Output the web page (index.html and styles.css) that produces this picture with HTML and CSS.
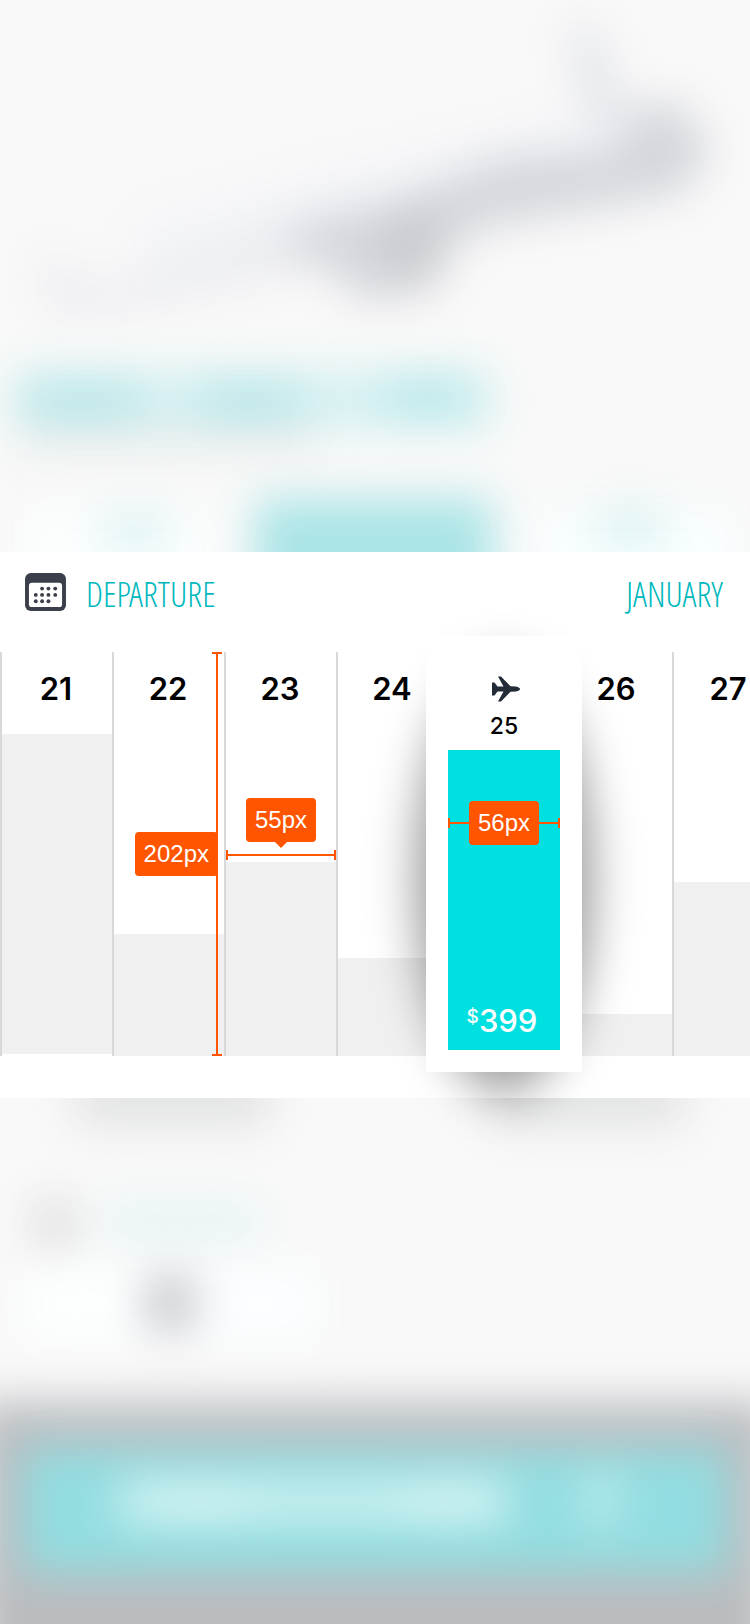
FILE: index.html
```html
<!DOCTYPE html>
<html lang="en">
<head>
<meta charset="utf-8">
<meta name="viewport" content="width=device-width, initial-scale=1">
<title>Departure</title>
<link rel="stylesheet" href="styles.css">
</head>
<body>
<main class="screen">
  <svg class="scene scene-top" viewBox="0 0 750 552" preserveAspectRatio="none" aria-hidden="true">
    <defs>
      <filter id="soft" filterUnits="userSpaceOnUse" x="-100" y="-100" width="950" height="850" color-interpolation-filters="sRGB"><feGaussianBlur stdDeviation="22"/></filter>
    </defs>
    <g filter="url(#soft)">
      <path d="M130 225 L300 180 L560 120 L640 120 L640 180 L420 220 L150 275z" fill="#f3f4f8"/>
      <path d="M35 255 L65 262 L95 290 L300 220 L340 262 L120 310 L60 318z" fill="#ebecf0"/>
      <path d="M566 25 L596 28 L632 125 L590 125z" fill="#e2e4ea"/>
      <path d="M625 118 L672 98 L712 150 L680 192 L480 226 L446 254 L434 290 L360 300 L325 262 L290 256 L290 226 L400 200 L500 160 L625 150z" fill="#d3d5db"/>
      <path d="M390 210 L440 206 L434 282 L390 282z" fill="#c9cace"/>
      <rect x="18" y="425" width="300" height="32" fill="#ededed"/>
      <rect x="12" y="372" width="480" height="56" fill="#d4f0f1"/>
      <rect x="25" y="380" width="115" height="40" fill="#b8e6e8"/>
      <rect x="200" y="380" width="100" height="40" fill="#b8e6e8"/>
      <rect x="385" y="376" width="85" height="42" fill="#b8e8ea"/>
      <rect x="25" y="510" width="190" height="150" fill="#fcfefe"/>
      <rect x="535" y="510" width="200" height="150" fill="#f9fefe"/>
      <rect x="100" y="516" width="70" height="32" fill="#d8f1f3"/>
      <rect x="595" y="511" width="70" height="34" fill="#d8f1f3"/>
      <rect x="256" y="499" width="236" height="150" fill="#aae4e6"/>
    </g>
  </svg>

  <section class="panel">
    <header class="panel-head">
      <svg class="calendar" viewBox="0 0 42 39" aria-hidden="true">
        <rect x="0" y="0" width="42" height="39" rx="6" fill="#3b3f49"/>
        <rect x="4" y="10" width="34" height="25" rx="3" fill="#fff"/>
        <g fill="#3b3f49">
          <circle cx="17.500" cy="16" r="2"/><circle cx="24" cy="16" r="2"/><circle cx="31" cy="16" r="2"/>
          <circle cx="11" cy="22.500" r="2"/><circle cx="17.500" cy="22.500" r="2"/><circle cx="24" cy="22.500" r="2"/><circle cx="31" cy="22.500" r="2"/>
          <circle cx="11" cy="29" r="2"/><circle cx="17.500" cy="29" r="2"/><circle cx="24" cy="29" r="2"/>
        </g>
      </svg>
      <h1 class="label">DEPARTURE</h1>
      <p class="label month">JANUARY</p>
    </header>

    <div class="days">
      <div class="day day-raised"><span class="num">21</span><span class="bar" style="height:320px"></span></div>
      <div class="day">
        <span class="num">22</span><span class="bar" style="height:122px"></span>
        <div class="rule-v"><span class="tag">202px</span></div>
      </div>
      <div class="day">
        <span class="num">23</span><span class="bar" style="height:194px"></span>
        <div class="rule-h rule-outer"><span class="tag tag-tip">55px</span></div>
      </div>
      <div class="day"><span class="num">24</span><span class="bar" style="height:98px"></span></div>
      <div class="day day-selected">
        <div class="card">
          <svg class="plane" viewBox="0 0 28 26" aria-hidden="true">
            <path d="M0 6.500 H2.500 L5.500 10.500 L11.500 10.500 L6 0.500 H9 L18.500 10.300 L24 10.500 Q28 11.500 28 13 Q28 14.500 24 15.500 L18.500 15.700 L9 25.500 H6 L11.500 15.500 L5.500 15.500 L2.500 19.500 H0 V13z" fill="#222b37"/>
          </svg>
          <span class="card-num">25</span>
          <div class="fare">
            <div class="rule-h rule-inner"><span class="tag">56px</span></div>
            <span class="price"><span class="currency">$</span>399</span>
          </div>
        </div>
      </div>
      <div class="day"><span class="num">26</span><span class="bar" style="height:42px"></span></div>
      <div class="day"><span class="num">27</span><span class="bar" style="height:174px"></span></div>
    </div>
  </section>

  <svg class="scene scene-bottom" viewBox="0 0 750 526" preserveAspectRatio="none" aria-hidden="true">
    <defs>
      <filter id="haze" filterUnits="userSpaceOnUse" x="-100" y="-100" width="950" height="850" color-interpolation-filters="sRGB"><feGaussianBlur stdDeviation="22"/></filter>
    </defs>
    <g filter="url(#haze)">
      <rect x="75" y="-30" width="195" height="58" fill="#e2e3e3"/>
      <rect x="490" y="-30" width="195" height="58" fill="#e2e3e3"/>
      <rect x="36" y="103" width="38" height="46" fill="#dadada"/>
      <rect x="105" y="108" width="155" height="30" fill="#e2f3f4"/>
      <rect x="25" y="172" width="120" height="68" fill="#fdffff"/>
      <rect x="200" y="172" width="120" height="68" fill="#fbfeff"/>
      <rect x="143" y="178" width="54" height="54" rx="20" fill="#c6c8ce"/>
      <rect x="-24" y="304" width="798" height="330" fill="#bbbcbf"/>
      <rect x="22" y="349" width="706" height="126" fill="#92dde1"/>
      <rect x="116" y="382" width="394" height="44" fill="#ccf0f0"/>
      <rect x="150" y="390" width="100" height="30" fill="#dcf6f6"/>
      <rect x="400" y="388" width="90" height="30" fill="#dcf6f6"/>
      <rect x="582" y="374" width="38" height="56" fill="#b8eaec"/>
    </g>
  </svg>
</main>
</body>
</html>
```
FILE: styles.css
```css
* {
  box-sizing: border-box;
}

body {
  margin: 0;
  background: #f9f9f9;
  color: #000;
  font-family: Inter, "Liberation Sans", sans-serif;
}

.screen {
  display: flex;
  flex-direction: column;
  min-height: 100vh;
  overflow-x: clip;
}

.scene {
  display: block;
  width: 100%;
}

.scene-top {
  height: 552px;
}

.scene-bottom {
  flex: 1;
  min-height: 526px;
}

.panel {
  position: relative;
  z-index: 1;
  padding-bottom: 42px;
  background: #fff;
}

.panel-head {
  display: flex;
  align-items: center;
  height: 100px;
  padding: 0 27px 20px 25px;
}

.calendar {
  width: 41px;
  height: 38px;
  margin-right: 20px;
}

.label {
  margin: 0;
  padding-top: 4px;
  color: #00b8bd;
  font-family: "Open Sans Condensed Light", "Open Sans Condensed", "Roboto Condensed", Lato, sans-serif;
  font-size: 35px;
  font-weight: 300;
  line-height: 40px;
}

.month {
  margin-left: auto;
}

.days {
  display: grid;
  grid-template-columns: repeat(7, 112px);
  height: 404px;
}

.day {
  position: relative;
  display: flex;
  flex-direction: column;
  justify-content: space-between;
  border-left: 2px solid #d8d8d8;
}

.day-raised {
  padding-bottom: 2px;
}

.day-selected {
  z-index: 1;
  border-left: 0;
}

.day-selected + .day {
  border-left-color: transparent;
}

.num {
  padding: 17px 2px 0 0;
  font-size: 31px;
  font-weight: 600;
  line-height: 40px;
  text-align: center;
}

.bar {
  background: #f0f0f0;
}

.card {
  position: absolute;
  top: -16px;
  left: -22px;
  display: flex;
  flex-direction: column;
  align-items: center;
  width: 156px;
  padding: 40px 22px 22px;
  background: #fff;
}

.day-selected::before {
  content: "";
  position: absolute;
  top: 10px;
  left: -32px;
  width: 176px;
  height: 432px;
  border-radius: 50%;
  background: rgba(0, 0, 0, 0.4);
  filter: blur(24px);
}

.plane {
  width: 28px;
  height: 26px;
  margin-left: 4px;
}

.card-num {
  padding: 8px 0;
  font-size: 23px;
  font-weight: 500;
  line-height: 32px;
}

.fare {
  position: relative;
  display: flex;
  align-items: flex-end;
  justify-content: center;
  width: 100%;
  height: 300px;
  padding: 0 4px 9px 0;
  background: #00e0e0;
  color: #fff;
}

.price {
  display: flex;
  font-size: 31px;
  font-weight: 500;
  line-height: 40px;
}

.currency {
  font-size: 19px;
  line-height: 32px;
}

.tag {
  position: absolute;
  height: 44px;
  padding: 0 9px;
  border-radius: 4px;
  background: #ff5500;
  color: #fff;
  font-family: "Liberation Sans", Arial, sans-serif;
  font-size: 24px;
  line-height: 44px;
}

.rule-v {
  position: absolute;
  top: 0;
  bottom: 0;
  right: 2px;
  width: 10px;
  border: solid #ff5500;
  border-width: 2px 0;
  background: linear-gradient(#ff5500, #ff5500) center / 2px 100% no-repeat;
}

.rule-v .tag {
  top: 178px;
  right: 4px;
}

.rule-h {
  position: absolute;
  left: 0;
  right: 0;
  display: flex;
  justify-content: center;
  align-items: center;
  height: 10px;
  border: solid #ff5500;
  border-width: 0 2px;
  background: linear-gradient(#ff5500, #ff5500) center / 100% 2px no-repeat;
}

.rule-outer {
  top: 198px;
}

.rule-inner {
  top: 68px;
}

.tag-tip {
  bottom: 18px;
}

.tag-tip::after {
  content: "";
  position: absolute;
  top: 44px;
  left: 50%;
  margin-left: -6px;
  border: 6px solid transparent;
  border-top-color: #ff5500;
  border-bottom: 0;
}
```
